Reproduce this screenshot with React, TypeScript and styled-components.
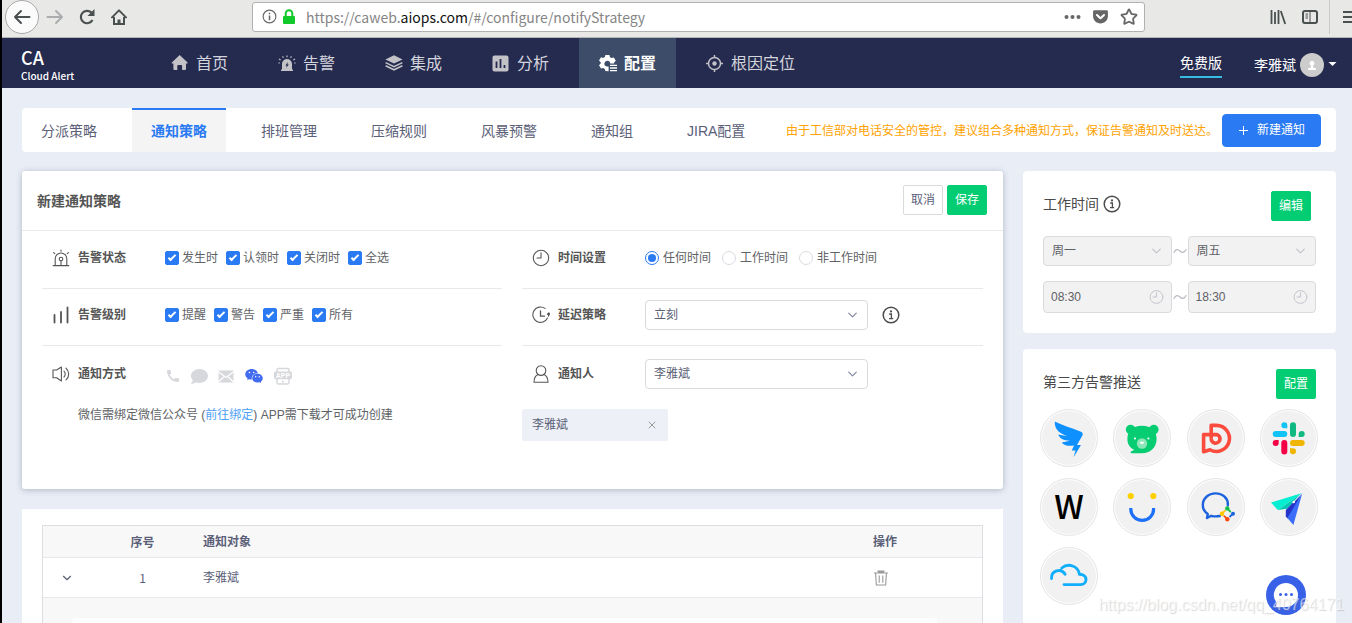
import React from "react";
import styled, { createGlobalStyle, css } from "styled-components";
import { AiFillWechat } from "react-icons/ai";
import { FaComment, FaGetPocket } from "react-icons/fa";
import { MdCall } from "react-icons/md";
import { ChevronDown, Star, X } from "lucide-react";

const sans = `"Liberation Sans", "Noto Sans CJK SC", sans-serif`;
const cjk = `"Noto Sans CJK SC", sans-serif`;

const GlobalStyle = createGlobalStyle`
  *, *::before, *::after { box-sizing: border-box; }
  body {
    margin: 0;
    font: 12px/18px ${sans};
    color: #555;
    background: #e9edf6;
  }
  button, input, select { font: inherit; color: inherit; margin: 0; }
  button { cursor: pointer; }
  svg { display: block; flex: none; }
`;

/* ---------- Frame ---------- */

const Frame = styled.div`
  position: relative;
  display: flex;
  flex-direction: column;
  height: 100vh;
  overflow: hidden;
  border-left: 2px solid #000;
`;

const BrowserBar = styled.div`
  display: flex;
  align-items: center;
  flex: none;
  height: 38px;
  padding: 0 0 4px 3px;
  background: #e8e8e7;
  border-bottom: 1px solid #b4b4b6;
  color: #4a4f50;
`;

const BrowserButton = styled.button<{ $round?: boolean }>`
  display: flex;
  align-items: center;
  justify-content: center;
  width: 32px;
  height: 32px;
  padding: 0;
  border: 0;
  background: none;
  ${(p) =>
    p.$round &&
    css`
      width: 34px;
      height: 34px;
      background: #fbfbfb;
      border: 1px solid #a9a9a9;
      border-radius: 50%;
    `}
`;

const AddressBar = styled.div`
  display: flex;
  align-items: center;
  flex: 1;
  min-width: 0;
  height: 30px;
  margin: 0 117px;
  padding: 0 6px 0 9px;
  gap: 5px;
  background: #fff;
  border: 1px solid #b1b1b3;
  border-radius: 3px;
  color: #666;
`;

const Address = styled.span`
  flex: 1;
  min-width: 0;
  padding-left: 5px;
  overflow: hidden;
  white-space: nowrap;
  font: 14px/20px ${cjk};
  color: #858585;
  b {
    font-weight: 400;
    color: #111;
  }
`;

const AddressActions = styled.div`
  display: flex;
  align-items: center;
  gap: 11px;
`;

const BarDivider = styled.i`
  width: 1px;
  height: 34px;
  margin-left: 3px;
  background: #c9c9c9;
`;

const MenuClip = styled.button`
  width: 22px;
  height: 32px;
  padding: 0 0 0 13px;
  border: 0;
  background: none;
  overflow: hidden;
`;

/* ---------- Top navigation ---------- */

const Header = styled.header`
  display: flex;
  flex: none;
  height: 50px;
  background: #252a4f;
  color: #fff;
`;

const Brand = styled.a`
  display: flex;
  flex-direction: column;
  width: 149px;
  padding: 8px 0 0 19px;
  color: #fff;
  text-decoration: none;
  font: 500 10px/16px ${cjk};
  strong {
    font-size: 18px;
    line-height: 22px;
    font-weight: 500;
  }
`;

const MainNav = styled.nav`
  display: flex;
  flex: 1;
  gap: 10px;
`;

const NavLink = styled.a<{ $active?: boolean }>`
  display: flex;
  align-items: center;
  gap: 7px;
  padding: 1px 20px 0;
  font-size: 16px;
  line-height: 24px;
  color: ${(p) => (p.$active ? "#fff" : "#d3d4dc")};
  font-weight: ${(p) => (p.$active ? 700 : 400)};
  background: ${(p) => (p.$active ? "#3d4d69" : "transparent")};
  text-decoration: none;
  svg {
    color: ${(p) => (p.$active ? "#fff" : "#c3c3c7")};
  }
`;

const Account = styled.div`
  display: flex;
  align-items: center;
  gap: 32px;
  padding-right: 15px;
  font-size: 14px;
  line-height: 22px;
`;

const PlanLink = styled.a`
  margin-top: 4px;
  padding-bottom: 2px;
  border-bottom: 2px solid #35bce0;
  color: #fff;
  text-decoration: none;
`;

const UserMenu = styled.button`
  display: flex;
  align-items: center;
  gap: 4px;
  padding: 3px 0 0;
  border: 0;
  background: none;
  color: #fff;
`;

/* ---------- Page ---------- */

const Page = styled.main`
  flex: 1;
  min-height: 0;
  padding: 20px 16px 0 20px;
  background: #e9edf6;
`;

const TabBar = styled.nav`
  display: flex;
  align-items: center;
  height: 44px;
  margin-bottom: 19px;
  padding-right: 15px;
  background: #fff;
  border-radius: 4px;
`;

const Tabs = styled.div`
  display: flex;
  flex: 1;
  gap: 16px;
  height: 100%;
`;

const Tab = styled.a<{ $active?: boolean }>`
  padding: 0 19px;
  border-top: 2px solid ${(p) => (p.$active ? "#2a7af3" : "transparent")};
  background: ${(p) => (p.$active ? "#f4f4f4" : "transparent")};
  color: ${(p) => (p.$active ? "#2a7af3" : "#5b6078")};
  font-size: 14px;
  line-height: 42px;
  font-weight: ${(p) => (p.$active ? 700 : 400)};
  text-decoration: none;
  white-space: nowrap;
`;

const Notice = styled.span`
  margin-right: 4px;
  padding-top: 2px;
  color: #ffa200;
  white-space: nowrap;
`;

const Button = styled.button<{ $kind: "primary" | "success" | "plain" }>`
  flex: none;
  height: ${(p) => (p.$kind === "primary" ? 33 : 30)}px;
  padding: ${(p) => (p.$kind === "primary" ? "0 15px 0 16px" : "0 7px")};
  border: 1px solid;
  border-radius: ${(p) => (p.$kind === "primary" ? 4 : 2)}px;
  line-height: 18px;
  white-space: nowrap;
  ${(p) =>
    p.$kind === "primary" &&
    css`
      display: flex;
      align-items: center;
      gap: 9px;
      background: #2a7af3;
      border-color: #2a7af3;
      color: #fff;
    `}
  ${(p) =>
    p.$kind === "success" &&
    css`
      background: #02cd72;
      border-color: #02cd72;
      color: #fff;
    `}
  ${(p) =>
    p.$kind === "plain" &&
    css`
      background: #fff;
      border-color: #d9dade;
      color: #5b6078;
    `}
`;

const Columns = styled.div`
  display: grid;
  grid-template-columns: minmax(0, 1fr) 313px;
  gap: 20px;
  align-items: start;
`;

const Stack = styled.div<{ $gap: number }>`
  display: flex;
  flex-direction: column;
  gap: ${(p) => p.$gap}px;
`;

/* ---------- Strategy form ---------- */

const FormCard = styled.form`
  padding-bottom: 48px;
  background: #fff;
  border-radius: 3px;
  box-shadow: 0 1px 6px rgba(40, 60, 80, 0.3);
`;

const FormHead = styled.div`
  display: flex;
  align-items: center;
  gap: 4px;
  height: 60px;
  padding: 0 16px 1px 15px;
  border-bottom: 1px solid #e8eaec;
  h2 {
    flex: 1;
    margin: 0;
    padding-top: 2px;
    font-size: 14px;
    line-height: 20px;
    color: #555;
  }
`;

const FormGrid = styled.div`
  display: grid;
  grid-template-columns: minmax(0, 460fr) minmax(0, 461fr);
  column-gap: 20px;
  padding: 0 20px;
`;

const Field = styled.div<{ $last?: boolean }>`
  display: flex;
  align-items: center;
  height: ${(p) => (p.$last ? 56 : 57)}px;
  padding-left: 10px;
  ${(p) =>
    !p.$last &&
    css`
      padding-bottom: 4px;
      border-bottom: 1px solid #e6e8ec;
    `}
  &:first-child {
    height: 58px;
  }
`;

const FieldName = styled.div`
  display: flex;
  align-items: center;
  gap: 8px;
  width: 113px;
  flex: none;
  font-weight: 700;
  color: #555;
`;

const Options = styled.div<{ $gap: number }>`
  display: flex;
  align-items: center;
  flex: 1;
  min-width: 0;
  gap: ${(p) => p.$gap}px;
`;

const Option = styled.label<{ $gap: number }>`
  display: flex;
  align-items: center;
  gap: ${(p) => p.$gap}px;
  white-space: nowrap;
  color: #606266;
`;

const CheckInput = styled.input`
  appearance: none;
  width: 14px;
  height: 14px;
  border-radius: 2px;
  border: 1px solid #d5d7de;
  display: grid;
  place-items: center;
  &:checked {
    background: #2a7af3;
    border-color: #2a7af3;
  }
  &:checked::before {
    content: "";
    width: 8px;
    height: 4px;
    margin-bottom: 2px;
    border: solid #fff;
    border-width: 0 0 2px 2px;
    transform: rotate(-45deg);
  }
`;

const RadioInput = styled.input`
  appearance: none;
  width: 14px;
  height: 14px;
  border-radius: 50%;
  border: 1px solid #d9dbe2;
  display: grid;
  place-items: center;
  &:checked {
    border-color: #2a7af3;
  }
  &:checked::before {
    content: "";
    width: 8px;
    height: 8px;
    border-radius: 50%;
    background: #2a7af3;
  }
`;

const Control = styled.div<{ $wide?: boolean; $tall?: boolean }>`
  position: relative;
  display: flex;
  flex: ${(p) => (p.$wide ? "0 1 223px" : "1 1 0")};
  min-width: 0;
  height: ${(p) => (p.$tall ? 32 : 30)}px;
  svg {
    position: absolute;
    right: 8px;
    top: 50%;
    transform: translateY(-50%);
    pointer-events: none;
    color: ${(p) => (p.$wide ? "#878ba3" : "#c3c5cc")};
  }
`;

const boxField = css`
  width: 100%;
  min-width: 0;
  padding: 0 8px;
  border: 1px solid #d9dadd;
  border-radius: 4px;
  background: #fff;
  color: #5b6078;
  opacity: 1;
  &:disabled {
    background: #f2f2f2;
    color: #5f6166;
  }
`;

const Select = styled.select`
  appearance: none;
  ${boxField}
`;

const TextInput = styled.input`
  ${boxField}
  padding: 0 7px;
`;

const InfoButton = styled.button`
  display: flex;
  align-items: center;
  height: 26px;
  padding: 0;
  border: 0;
  background: none;
  color: #4c4c4c;
`;

const Channels = styled.div`
  display: flex;
  align-items: center;
  gap: 10px;
  padding-top: 4px;
`;

const Channel = styled.button<{ $on?: boolean }>`
  display: flex;
  align-items: center;
  justify-content: center;
  height: 20px;
  padding: 0;
  border: 0;
  background: none;
  color: ${(p) => (p.$on ? "#426cf0" : "#d7d8dc")};
`;

const Hint = styled.p`
  margin: 4px 0 0 36px;
  color: #606266;
  a {
    color: #4f9ff5;
    text-decoration: none;
  }
`;

const Chip = styled.div`
  display: flex;
  align-items: center;
  justify-content: space-between;
  width: 146px;
  height: 32px;
  margin-top: 7px;
  padding: 0 10px;
  background: #edf1f7;
  border-radius: 2px;
  color: #5b6078;
  button {
    display: flex;
    padding: 0;
    border: 0;
    background: none;
    color: #999;
  }
`;

/* ---------- Table ---------- */

const TableCard = styled.section`
  padding: 16px 20px 0;
  background: #fff;
`;

const Table = styled.table`
  width: 100%;
  table-layout: fixed;
  border-collapse: separate;
  border-spacing: 0;
  border: 1px solid #dcdee2;
  color: #5b6078;
  th,
  td {
    height: 40px;
    padding: 0 8px;
    text-align: left;
    border-bottom: 1px solid #e6e8eb;
  }
  th {
    height: 32px;
    background: #f8f8f8;
    font-weight: 700;
  }
  td.expanded {
    height: auto;
    padding: 20px 45px 20px 29px;
    background: #f8f8f8;
  }
`;

const Centered = styled.span`
  display: flex;
  justify-content: center;
  font-family: ${cjk};
`;

const IconButton = styled.button`
  display: flex;
  padding: 0;
  border: 0;
  background: none;
  color: #999;
`;

const CenterButton = styled(IconButton)`
  margin: 0 auto;
  color: #5b6078;
`;

const DetailBox = styled.div`
  height: 90px;
  background: #fff;
  border-radius: 4px;
`;

/* ---------- Side cards ---------- */

const SideCard = styled.section`
  padding: 20px;
  background: #fff;
  border-radius: 4px;
`;

const SideHead = styled.div<{ $inset?: boolean }>`
  display: flex;
  align-items: flex-start;
  gap: 4px;
  height: 30px;
  padding-right: ${(p) => (p.$inset ? 5 : 0)}px;
  h3 {
    margin: 0;
    font-weight: 400;
    font-size: 14px;
    line-height: 26px;
    color: #4a4a4a;
  }
  > :last-child {
    margin-left: auto;
  }
`;

const RangeRow = styled.div`
  display: flex;
  align-items: center;
  gap: 1px;
  margin-top: 15px;
  color: #b5b7bf;
`;

const AppGrid = styled.div`
  display: grid;
  grid-template-columns: repeat(4, 58px);
  justify-content: space-between;
  row-gap: 11px;
  margin: 10px -2px 0 -3px;
`;

const AppLink = styled.a`
  display: flex;
  align-items: center;
  justify-content: center;
  width: 58px;
  height: 58px;
  border: 1px solid #e6e6e6;
  border-radius: 50%;
  background: #f1f1f1;
  box-shadow: inset 0 0 0 1px #fff;
  font: 500 33px/36px ${cjk};
  color: #000;
  text-decoration: none;
  span {
    padding-bottom: 4px;
  }
`;

const ChatButton = styled.button`
  position: absolute;
  right: 46px;
  bottom: 8px;
  width: 40px;
  height: 40px;
  padding: 0;
  border: 0;
  border-radius: 50%;
  background: #3861e7;
`;

const Watermark = styled.span`
  position: absolute;
  right: 8px;
  bottom: 8px;
  font-size: 16px;
  line-height: 20px;
  color: rgba(255, 255, 255, 0.6);
  text-shadow: 1px 1px 1px rgba(130, 130, 130, 0.3);
  pointer-events: none;
`;

/* ---------- Icons ---------- */

const line = { fill: "none", stroke: "currentColor", strokeLinecap: "round", strokeLinejoin: "round" } as const;

const Clock = ({ size = 18, delay = false }: { size?: number; delay?: boolean }) => (
  <svg width={size} height={size} viewBox="0 0 18 18" {...line} strokeWidth={size < 18 ? 1.2 : 1.1}>
    {delay ? (
      <>
        <path d="M15.500 12A7.700 7.700 0 1 1 13 2.400" />
        <path d="M16.600 10V7.200M15.600 8.200l1.200-1.200.8 1M8.500 5v5.200h4" strokeWidth="1.300" />
      </>
    ) : (
      <>
        <circle cx="9" cy="9" r="7.700" />
        <path d="M9 3.800V9H5" />
      </>
    )}
  </svg>
);

const InfoIcon = () => (
  <svg width="18" height="18" viewBox="0 0 18 18">
    <circle cx="9" cy="9" r="7.800" fill="none" stroke="currentColor" strokeWidth="1.500" />
    <circle cx="9" cy="5.400" r="1.100" fill="currentColor" />
    <path d="M7.200 8h2.200v4.200M7 12.600h4.200" fill="none" stroke="currentColor" strokeWidth="1.300" />
  </svg>
);

const TildeIcon = () => (
  <svg width="14" height="8" viewBox="0 0 14 8" {...line} strokeWidth="1.100">
    <path d="M1 5.500C2.600 1.800 5 2 7 4s4.400 2.200 6-1.500" />
  </svg>
);

const AlarmIcon = () => (
  <svg width="18" height="18" viewBox="0 0 18 18" {...line} strokeWidth="1.100">
    <path d="M1.200 16.600h15.600M3.200 16.400V9.800a5.800 5.800 0 0 1 11.600 0v6.600M9 1v1.200M1.600 3.600l1.200 1M16.400 3.600l-1.200 1M9 11.800v4.600" />
    <circle cx="9" cy="10" r="1.800" />
  </svg>
);

const LevelIcon = () => (
  <svg width="18" height="18" viewBox="0 0 18 18" {...line} strokeWidth="1.800">
    <path d="M2.500 9v7.500M9 6v10.500M15.500 1.500v15" />
  </svg>
);

const SpeakerIcon = () => (
  <svg width="18" height="18" viewBox="0 0 18 18" {...line} strokeWidth="1.100">
    <path d="M1 5h3.600L9.400 2v14l-4.800-3.200H1zM12 6.200c1.600 1.400 1.600 4.200 0 5.800M14 3.200c3.600 2.800 3.600 8.600 0 11.600" />
  </svg>
);

const PersonIcon = () => (
  <svg width="18" height="18" viewBox="0 0 18 18" {...line} strokeWidth="1.100">
    <circle cx="9" cy="5.600" r="4.800" />
    <path d="M6 9.400C3.400 10.600 2 13.400 2 17.200h14c0-3.800-1.400-6.600-4-7.800" />
  </svg>
);

const HomeIcon = () => (
  <svg width="18" height="17" viewBox="0 0 18 17" fill="currentColor">
    <path d="M8.700 0 16.600 7.400v1H15V14a1 1 0 0 1-1 1h-2.900v-4a1 1 0 0 0-1-1H7.300a1 1 0 0 0-1 1v4H3.400a1 1 0 0 1-1-1V8.400H.8v-1z" />
  </svg>
);

const SirenIcon = () => (
  <svg width="18" height="17" viewBox="0 0 18 17">
    <path d="M3 16h12v-1.600h-1V9a5 5 0 0 0-10 0v5.400H3z" fill="currentColor" />
    <path d="m9.800 7-2.400 3.600h1.400L8.200 13l2.600-3.600H9.400z" fill="#252a4f" />
    <path d="M9 .6v1.600M4.600 1.400l.8 1.400M13.400 1.400l-.8 1.400M1 4l1.600 1M17 4l-1.600 1M.4 8h1.400M16.200 8h1.400" stroke="currentColor" strokeWidth="1.200" />
  </svg>
);

const LayersIcon = () => (
  <svg width="18" height="17" viewBox="0 0 18 17">
    <path d="m9 .2 8.600 4.200L9 8.600.4 4.400z" fill="currentColor" />
    <path d="M.6 7.600 9 11.600l8.400-4M.6 10.800 9 14.800l8.400-4" fill="none" stroke="currentColor" strokeWidth="1.500" />
  </svg>
);

const ChartIcon = () => (
  <svg width="18" height="17" viewBox="0 0 18 17">
    <rect x=".5" y=".5" width="16" height="16" rx="2" fill="currentColor" />
    <path d="M4.500 6.500V13M8.500 4v9M12.500 10v3" stroke="#252a4f" strokeWidth="1.800" />
  </svg>
);

const GearIcon = () => (
  <svg width="18" height="17" viewBox="0 0 18 17">
    <path
      d="M6.400 0h4l.6 2.200 1.600.9 2.200-.6 2 3.300-1.700 1.700v1h-3.900a2.900 2.900 0 1 0-3.400 2.900l1.800.2v4.600l-3.200-.1-.6-2.200-1.600-.9-2.200.6-2-3.300 1.700-1.700V7.200L0 5.600l2-3.300 2.200.6 1.600-.9z"
      fill="currentColor"
    />
    <path d="M11 10.400h7M11 13h7M11 15.600h7" stroke="currentColor" strokeWidth="1.400" />
  </svg>
);

const TargetIcon = () => (
  <svg width="18" height="17" viewBox="0 0 18 17" fill="none" stroke="currentColor" strokeWidth="1.500">
    <circle cx="8.500" cy="8.500" r="6" />
    <circle cx="8.500" cy="8.500" r="2.200" fill="currentColor" stroke="none" />
    <path d="M8.500 0v3M8.500 14v3M0 8.500h3M14 8.500h3" />
  </svg>
);

const TrashIcon = () => (
  <svg width="16" height="16" viewBox="0 0 16 16" fill="none" stroke="currentColor" strokeWidth="1.100">
    <path d="M5 2V1h6v1M1 3h14M2.600 3l.7 12h9.400l.7-12M6.200 5.400v7.400M9.800 5.400v7.400" />
    <path d="M5 2h6" strokeWidth="2" />
  </svg>
);

const MailIcon = () => (
  <svg width="16" height="13" viewBox="0 0 16 13">
    <rect x=".5" y=".5" width="15" height="12" fill="currentColor" />
    <path d="m0 1.600 8 6 8-6M.4 12l5.400-5M15.600 12l-5.400-5" fill="none" stroke="#fff" strokeWidth="1.200" />
  </svg>
);

const PhoneAppIcon = () => (
  <svg width="18" height="18" viewBox="0 0 18 18">
    <rect x="3" y="1.400" width="12" height="15.600" rx="1.400" fill="none" stroke="currentColor" strokeWidth="1.500" />
    <rect x="0" y="4.600" width="18" height="7.600" rx="1.400" fill="currentColor" />
    <circle cx="9" cy="14.500" r="1" fill="currentColor" />
    <text x="9" y="10.800" textAnchor="middle" fontSize="7" fontWeight="700" fontFamily="Liberation Sans" fill="#fff">
      APP
    </text>
  </svg>
);

const Logo = ({ children }: { children: React.ReactNode }) => (
  <svg width="58" height="58" viewBox="0 0 58 58" aria-hidden="true">
    {children}
  </svg>
);

const WingLogo = () => (
  <Logo>
    <path
      fill="#0e90ff"
      d="M14.800 12.600c7 3.600 16 6.200 25.600 9.800q3.200 1.200 2 4L37 36h4L33.600 48.200l1.900-6.600h-3.800l2.300-5.200c-5 .8-10.400.2-12.200-3l8-1.600c-6 0-10.400-2.400-11.600-6.200l9.400 1.700c-7.200-2.400-13.300-6-12.800-14.700z"
    />
  </Logo>
);

const BearLogo = () => (
  <Logo>
    <g fill="#06cc72">
      <circle cx="17.600" cy="20.600" r="4.800" />
      <circle cx="40.800" cy="20.600" r="4.800" />
      <path d="M29 16.800c9.500 0 14.600 5 14.600 13 0 9-6.300 14.400-14.600 14.400H19c-1.600 0-2-1.300-.6-2l3-1.300C16.500 38.500 14.400 35 14.400 30c0-8.200 5.100-13.200 14.600-13.200z" />
    </g>
    <circle cx="29" cy="34.500" r="5.200" fill="#8de6b8" />
    <path d="M26.800 32.800h4.400c0 3-4.400 3-4.400 0z" fill="#fff" />
    <circle cx="22" cy="29.500" r="1.100" fill="#fff" />
    <circle cx="35.400" cy="29.500" r="1.100" fill="#fff" />
  </Logo>
);

const BubbleDLogo = () => (
  <Logo>
    <path
      d="M24.200 29.500V16.400H29.500a13 13 0 1 1-6.500 24.300l-6.400 2V25.600H30a4.400 4.400 0 1 1-5.800 4"
      fill="none"
      stroke="#fb4b3d"
      strokeWidth="3.600"
      strokeLinejoin="round"
    />
  </Logo>
);

const HashLogo = () => (
  <Logo>
    <g fill="#12c3f7">
      <rect x="12.700" y="22" width="14.600" height="6" rx="3" />
      <path d="M27.300 19.300h-3a3 3 0 1 1 3-3z" />
    </g>
    <g fill="#0fb981">
      <rect x="30" y="13.300" width="6" height="14.700" rx="3" />
      <path d="M38.700 28v-3a3 3 0 1 1 3 3z" />
    </g>
    <g fill="#f0b501">
      <rect x="30" y="31" width="14.700" height="6" rx="3" />
      <path d="M30 39.300h3a3 3 0 1 1-3 3z" />
    </g>
    <g fill="#f40146">
      <rect x="21.300" y="31" width="6" height="14.600" rx="3" />
      <path d="M18.700 31v3a3 3 0 1 1-3-3z" />
    </g>
  </Logo>
);

const SmileLogo = () => (
  <Logo>
    <circle cx="17.700" cy="18" r="3.100" fill="#ffd000" />
    <circle cx="40.300" cy="18" r="3.100" fill="#ffd000" />
    <path d="M17.800 30v1a11.400 11.400 0 0 0 22.800 0v-1" fill="none" stroke="#1c70fb" strokeWidth="3.200" />
  </Logo>
);

const ChatLogo = () => (
  <Logo>
    <path
      d="M40.800 27.500C41.500 20 35.500 15.400 28.500 15.400S15.800 20.500 15.800 27c0 4 2 7 5 9l-.8 4 4.200-2.200c2.500.8 5.300.8 8.600.2"
      fill="none"
      stroke="#1c62dd"
      strokeWidth="2.400"
      strokeLinecap="round"
      strokeLinejoin="round"
    />
    <g fill="none" strokeWidth="1.800" strokeLinecap="round">
      <path d="m40.300 30.400 3 3.200" stroke="#0fbf4a" />
      <path d="m46 35.700-3 2.800" stroke="#1c62dd" />
      <path d="m40.300 41.200-3-3" stroke="#fb4b10" />
      <path d="m35 35.700 3-3" stroke="#ffc700" />
    </g>
    <circle cx="40.300" cy="30.400" r="2.200" fill="#0fbf4a" />
    <circle cx="46" cy="35.700" r="2" fill="#1c62dd" />
    <circle cx="40.300" cy="41.200" r="2.200" fill="#fb4b10" />
    <circle cx="35" cy="35.700" r="2.200" fill="#ffc700" />
  </Logo>
);

const PlaneLogo = () => (
  <Logo>
    <path d="M11 24.500 42.300 15 17.800 32z" fill="#05eed1" />
    <path d="M17.800 32 42.300 15 27 30.800z" fill="#03c8b3" />
    <path d="M42.300 15 25.800 32v6.500l2.400 2.600z" fill="#2434c9" />
    <path d="m42.300 15-8.900 32-6-7z" fill="#3b6dfa" />
    <path d="M42.300 15 34 23.600" stroke="#fff" strokeWidth="1" />
    <circle cx="33.700" cy="24" r="1.300" fill="#fff" />
  </Logo>
);

const CloudLogo = () => (
  <Logo>
    <path
      d="M11.600 31.500c-.8-8 9.600-11 13.500-4.300M21.800 21c6.600-5.400 16.400-2 17.600 6.200 3.800 0 6.600 2 6.600 5.200 0 3.400-2.400 5.200-5.400 5.200H24"
      fill="none"
      stroke="#10aefb"
      strokeWidth="2.900"
      strokeLinecap="round"
      strokeLinejoin="round"
    />
  </Logo>
);

/* ---------- Data ---------- */

const navItems = [
  { label: "首页", icon: <HomeIcon /> },
  { label: "告警", icon: <SirenIcon /> },
  { label: "集成", icon: <LayersIcon /> },
  { label: "分析", icon: <ChartIcon /> },
  { label: "配置", icon: <GearIcon />, active: true },
  { label: "根因定位", icon: <TargetIcon /> },
];

const tabs = ["分派策略", "通知策略", "排班管理", "压缩规则", "风暴预警", "通知组", "JIRA配置"];

const pushApps = [
  { name: "钉钉", logo: <WingLogo /> },
  { name: "小熊", logo: <BearLogo /> },
  { name: "倍洽", logo: <BubbleDLogo /> },
  { name: "Slack", logo: <HashLogo /> },
  { name: "Welink", logo: <span>W</span> },
  { name: "微笑", logo: <SmileLogo /> },
  { name: "企业微信", logo: <ChatLogo /> },
  { name: "飞书", logo: <PlaneLogo /> },
  { name: "云之家", logo: <CloudLogo /> },
];

/* ---------- Sections ---------- */

const Checks = ({ labels }: { labels: string[] }) => (
  <Options $gap={8}>
    {labels.map((label) => (
      <Option key={label} $gap={3}>
        <CheckInput type="checkbox" defaultChecked />
        {label}
      </Option>
    ))}
  </Options>
);

const BrowserToolbar = () => (
  <BrowserBar>
    <BrowserButton $round aria-label="后退">
      <svg width="18" height="16" viewBox="0 0 18 16" {...line} strokeWidth="2">
        <path d="M16.500 8H2M8 2 2 8l6 6" />
      </svg>
    </BrowserButton>
    <BrowserButton aria-label="前进">
      <svg width="18" height="16" viewBox="0 0 18 16" {...line} stroke="#aaacad" strokeWidth="2">
        <path d="M1.500 8H16M10 2l6 6-6 6" />
      </svg>
    </BrowserButton>
    <BrowserButton aria-label="刷新">
      <svg width="16" height="16" viewBox="0 0 16 16">
        <path d="M13.500 11A6.200 6.200 0 1 1 12.400 3.600" fill="none" stroke="currentColor" strokeWidth="2.200" />
        <path d="M15.500 0v7h-7z" fill="currentColor" />
      </svg>
    </BrowserButton>
    <BrowserButton aria-label="主页">
      <svg width="16" height="16" viewBox="0 0 16 16" fill="none" stroke="currentColor" strokeWidth="2">
        <path d="m1 8.400 7-7 7 7" strokeLinecap="round" strokeLinejoin="round" />
        <path d="M3 8v7h10V8" />
        <path d="M8 15v-4.500" strokeWidth="3" />
      </svg>
    </BrowserButton>
    <AddressBar>
      <svg width="15" height="15" viewBox="0 0 16 16">
        <circle cx="8" cy="8" r="6.800" fill="none" stroke="currentColor" strokeWidth="1.200" />
        <path d="M8 7v5M8 4v1.600" stroke="currentColor" strokeWidth="1.600" />
      </svg>
      <svg width="14" height="16" viewBox="0 0 14 16">
        <rect x="1" y="7" width="12" height="8" rx="1" fill="#12c92c" />
        <path d="M3.700 8V4.600a3.300 3.300 0 0 1 6.600 0V8" fill="none" stroke="#12c92c" strokeWidth="2" />
      </svg>
      <Address>
        https://caweb.<b>aiops.com</b>/#/configure/notifyStrategy
      </Address>
      <AddressActions>
        <svg width="17" height="16" viewBox="0 0 17 16" fill="currentColor">
          <circle cx="2.500" cy="8" r="2" />
          <circle cx="8.500" cy="8" r="2" />
          <circle cx="14.500" cy="8" r="2" />
        </svg>
        <FaGetPocket size={17} />
        <Star size={18} strokeWidth={2.4} />
      </AddressActions>
    </AddressBar>
    <BrowserButton aria-label="书库">
      <svg width="16" height="16" viewBox="0 0 16 16" stroke="currentColor" strokeWidth="1.800">
        <path d="M1.500 1v14M5 3v12M8.500 1v14M10.800 2l4.400 13" />
      </svg>
    </BrowserButton>
    <BrowserButton aria-label="侧栏">
      <svg width="16" height="14" viewBox="0 0 16 14" fill="none" stroke="currentColor">
        <rect x="1" y="1" width="14" height="12" rx="2" strokeWidth="2" />
        <path d="M8 1v12M3.500 4H6M3.500 6H6M3.500 8H6" />
      </svg>
    </BrowserButton>
    <BarDivider />
    <MenuClip aria-label="菜单">
      <svg width="16" height="12" viewBox="0 0 16 12" stroke="currentColor" strokeWidth="2">
        <path d="M0 1h16M0 6h16M0 11h16" />
      </svg>
    </MenuClip>
  </BrowserBar>
);

const StrategyForm = () => (
  <FormCard onSubmit={(e) => e.preventDefault()}>
    <FormHead>
      <h2>新建通知策略</h2>
      <Button $kind="plain" type="button">取消</Button>
      <Button $kind="success" type="submit">保存</Button>
    </FormHead>
    <FormGrid>
      <div>
        <Field>
          <FieldName><AlarmIcon />告警状态</FieldName>
          <Checks labels={["发生时", "认领时", "关闭时", "全选"]} />
        </Field>
        <Field>
          <FieldName><LevelIcon />告警级别</FieldName>
          <Checks labels={["提醒", "警告", "严重", "所有"]} />
        </Field>
        <Field $last>
          <FieldName><SpeakerIcon />通知方式</FieldName>
          <Channels>
            <Channel type="button" aria-label="电话"><MdCall size={16} /></Channel>
            <Channel type="button" aria-label="短信"><FaComment size={17} /></Channel>
            <Channel type="button" aria-label="邮件"><MailIcon /></Channel>
            <Channel type="button" aria-label="微信" $on><AiFillWechat size={20} /></Channel>
            <Channel type="button" aria-label="APP"><PhoneAppIcon /></Channel>
          </Channels>
        </Field>
        <Hint>
          微信需绑定微信公众号 (<a href="#bind">前往绑定</a>) APP需下载才可成功创建
        </Hint>
      </div>
      <div>
        <Field>
          <FieldName><Clock />时间设置</FieldName>
          <Options $gap={11}>
            {["任何时间", "工作时间", "非工作时间"].map((label, i) => (
              <Option key={label} $gap={4}>
                <RadioInput type="radio" name="period" defaultChecked={i === 0} />
                {label}
              </Option>
            ))}
          </Options>
        </Field>
        <Field>
          <FieldName><Clock delay /><label htmlFor="delay">延迟策略</label></FieldName>
          <Options $gap={14}>
            <Control $wide>
              <Select id="delay"><option>立刻</option></Select>
              <ChevronDown size={15} />
            </Control>
            <InfoButton type="button" aria-label="说明"><InfoIcon /></InfoButton>
          </Options>
        </Field>
        <Field $last>
          <FieldName><PersonIcon /><label htmlFor="person">通知人</label></FieldName>
          <Control $wide>
            <Select id="person"><option>李雅斌</option></Select>
            <ChevronDown size={15} />
          </Control>
        </Field>
        <Chip>
          李雅斌
          <button type="button" aria-label="移除"><X size={12} /></button>
        </Chip>
      </div>
    </FormGrid>
  </FormCard>
);

const StrategyTable = () => (
  <TableCard>
    <Table>
      <colgroup>
        <col width="47" />
        <col width="105" />
        <col />
        <col width="117" />
      </colgroup>
      <thead>
        <tr>
          <th />
          <th><Centered>序号</Centered></th>
          <th>通知对象</th>
          <th>操作</th>
        </tr>
      </thead>
      <tbody>
        <tr>
          <td><CenterButton aria-label="展开"><ChevronDown size={14} /></CenterButton></td>
          <td><Centered>1</Centered></td>
          <td>李雅斌</td>
          <td><IconButton aria-label="删除"><TrashIcon /></IconButton></td>
        </tr>
        <tr>
          <td className="expanded" colSpan={4}><DetailBox /></td>
        </tr>
      </tbody>
    </Table>
  </TableCard>
);

const WorkTimeCard = () => (
  <SideCard>
    <SideHead $inset>
      <h3>工作时间</h3>
      <InfoButton type="button" aria-label="说明"><InfoIcon /></InfoButton>
      <Button $kind="success">编辑</Button>
    </SideHead>
    <RangeRow>
      <Control>
        <Select aria-label="开始日" disabled><option>周一</option></Select>
        <ChevronDown size={15} />
      </Control>
      <TildeIcon />
      <Control>
        <Select aria-label="结束日" disabled><option>周五</option></Select>
        <ChevronDown size={15} />
      </Control>
    </RangeRow>
    <RangeRow>
      <Control $tall>
        <TextInput aria-label="开始时间" disabled defaultValue="08:30" />
        <Clock size={15} />
      </Control>
      <TildeIcon />
      <Control $tall>
        <TextInput aria-label="结束时间" disabled defaultValue="18:30" />
        <Clock size={15} />
      </Control>
    </RangeRow>
  </SideCard>
);

const PushCard = () => (
  <SideCard>
    <SideHead>
      <h3>第三方告警推送</h3>
      <Button $kind="success">配置</Button>
    </SideHead>
    <AppGrid>
      {pushApps.map((app) => (
        <AppLink key={app.name} href="#app" aria-label={app.name}>{app.logo}</AppLink>
      ))}
    </AppGrid>
  </SideCard>
);

export default function App() {
  return (
    <>
      <GlobalStyle />
      <Frame>
        <BrowserToolbar />
        <Header>
          <Brand href="#home"><strong>CA</strong>Cloud Alert</Brand>
          <MainNav>
            {navItems.map((item) => (
              <NavLink key={item.label} href="#nav" $active={item.active}>
                {item.icon}
                {item.label}
              </NavLink>
            ))}
          </MainNav>
          <Account>
            <PlanLink href="#plan">免费版</PlanLink>
            <UserMenu>
              李雅斌
              <svg width="24" height="24" viewBox="0 0 24 24">
                <circle cx="12" cy="12" r="12" fill="#ccc" />
                <circle cx="12" cy="10.500" r="2.400" fill="#fff" />
                <path d="M11 12h2v2.600l3 1v1.400H8v-1.400l3-1z" fill="#fff" />
              </svg>
              <svg width="9" height="8" viewBox="0 0 9 8"><path d="M.5 1h8l-4 4z" fill="#fff" /></svg>
            </UserMenu>
          </Account>
        </Header>
        <Page>
          <TabBar>
            <Tabs>
              {tabs.map((tab, i) => (
                <Tab key={tab} href="#tab" $active={i === 1}>{tab}</Tab>
              ))}
            </Tabs>
            <Notice>由于工信部对电话安全的管控，建议组合多种通知方式，保证告警通知及时送达。</Notice>
            <Button $kind="primary">
              <svg width="9" height="9" viewBox="0 0 9 9" stroke="#fff"><path d="M4.500 0v9M0 4.500h9" /></svg>
              新建通知
            </Button>
          </TabBar>
          <Columns>
            <Stack $gap={20}>
              <StrategyForm />
              <StrategyTable />
            </Stack>
            <Stack $gap={16}>
              <WorkTimeCard />
              <PushCard />
            </Stack>
          </Columns>
        </Page>
        <ChatButton aria-label="在线客服">
          <svg width="40" height="40" viewBox="0 0 40 40">
            <path d="M20 8a12 12 0 0 1 0 24H11.500a1.500 1.500 0 0 1-1.500-1.500l.5-3A12 12 0 0 1 20 8z" fill="#fff" />
            <g fill="#3861e7">
              <circle cx="14.500" cy="19.500" r="1.500" />
              <circle cx="20" cy="19.500" r="1.500" />
              <circle cx="25.500" cy="19.500" r="1.500" />
            </g>
          </svg>
        </ChatButton>
        <Watermark>https://blog.csdn.net/qq_40764171</Watermark>
      </Frame>
    </>
  );
}
